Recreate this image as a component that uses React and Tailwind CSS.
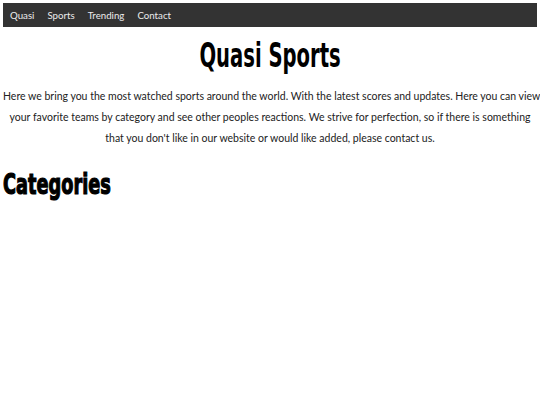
const navLinks = ["Quasi", "Sports", "Trending", "Contact"];

const App = () => {
  return (
    <div className="min-h-[405px] overflow-hidden bg-white px-[3px] pt-[3px] font-['Lato','Noto_Sans',sans-serif] text-black">
      <nav className="flex h-[24px] items-center gap-[13px] bg-[#333333] px-[7px]">
        {navLinks.map((link) => (
          <a key={link} href="#" className="text-[9.7px] text-[#ececec]">
            {link}
          </a>
        ))}
      </nav>

      <h1 className="mt-[8px] text-center font-['DejaVu_Sans',sans-serif] text-[33px] font-bold leading-[42px] font-stretch-condensed">
        <span className="inline-block scale-x-[0.66]">Quasi Sports</span>
      </h1>

      <p className="mt-[9px] whitespace-nowrap text-center text-[10.5px] leading-[21px] text-[#222]">
        <span className="block">
          Here we bring you the most watched sports around the world. With the latest scores and updates. Here you can view
        </span>
        <span className="block">
          your favorite teams by category and see other peoples reactions. We strive for perfection, so if there is something
        </span>
        <span className="block">that you don't like in our website or would like added, please contact us.</span>
      </p>

      <h2 className="mt-[18px] font-['DejaVu_Sans',sans-serif] text-[29px] font-bold leading-[34px] font-stretch-condensed">
        <span className="inline-block origin-left scale-x-[0.68] [-webkit-text-stroke:1.2px_black]">Categories</span>
      </h2>
    </div>
  );
};

export default App;
